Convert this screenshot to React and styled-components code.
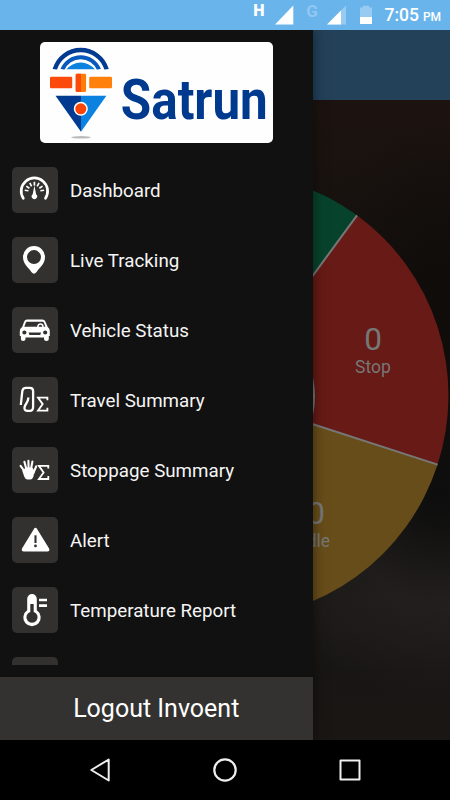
import React from "react";
import styled, { createGlobalStyle } from "styled-components";

const GlobalStyle = createGlobalStyle`
  *, *::before, *::after { box-sizing: border-box; }
  body { margin: 0; background: #000; font-family: Roboto, sans-serif; }
  svg { display: block; }
`;

const Phone = styled.div`
  width: 450px;
  height: 800px;
  display: flex;
  flex-direction: column;
  overflow: hidden;
  background: #000;
`;

const StatusBar = styled.header`
  height: 30px;
  flex: none;
  display: flex;
  justify-content: flex-end;
  background: #6ab4ec;
  color: #fff;
`;

const StatusIcons = styled.svg`
  width: 130px;
  height: 30px;
`;

const Clock = styled.div`
  width: 74px;
  padding-left: 8.5px;
  font-size: 17.5px;
  font-weight: 500;
  line-height: 31px;
  white-space: nowrap;
`;

const Meridiem = styled.span`
  margin-left: 4px;
  font-size: 12px;
`;

const Stage = styled.main`
  position: relative;
  height: 710px;
  flex: none;
  display: flex;
  flex-direction: column;
  overflow: hidden;
`;

const AppBar = styled.div`
  height: 70px;
  flex: none;
  background: #234159;
`;

const Backdrop = styled.section`
  height: 640px;
  background:
    radial-gradient(ellipse 90px 110px at 440px 395px, #0d0d0d 0%, transparent 100%),
    radial-gradient(ellipse 140px 180px at 450px 200px, #100c0a 10%, transparent 100%),
    radial-gradient(ellipse 170px 120px at 450px 480px, #23201e 0%, transparent 100%),
    linear-gradient(#1c1310 0, #17120f 120px, #110e0c 260px, #151311 400px, #1c1a18 500px, #181614 570px, #1a1614 640px);
`;

const Chart = styled.svg`
  width: 450px;
  height: 640px;
`;

const Drawer = styled.aside`
  position: absolute;
  inset: 0 auto 0 0;
  width: 312.5px;
  display: flex;
  flex-direction: column;
  background: #111;
  box-shadow: 0 0 12px rgba(0, 0, 0, 0.5);
`;

const Brand = styled.div`
  width: 233px;
  height: 101px;
  flex: none;
  margin: 12px 0 0 40px;
  border-radius: 5px;
  background: #fefefe;
`;

const LogoArt = styled.svg`
  width: 233px;
  height: 101px;
  overflow: visible;
`;

const Menu = styled.nav`
  height: 510px;
  flex: none;
  margin-top: 12px;
  padding: 12px 12px 0;
  display: flex;
  flex-direction: column;
  gap: 24px;
  overflow: hidden;
`;

const MenuItem = styled.div`
  height: 46px;
  flex: none;
  display: flex;
  align-items: center;
  gap: 12px;
  color: #f5f5f5;
  font-size: 18.75px;
  white-space: nowrap;
`;

const Label = styled.span`
  padding-top: 2px;
`;

const IconTile = styled.div`
  width: 46px;
  height: 46px;
  flex: none;
  border-radius: 5px;
  background: #333130;
`;

const Logout = styled.div`
  height: 63px;
  flex: none;
  margin-top: auto;
  display: flex;
  align-items: center;
  justify-content: center;
  background: #343230;
  color: #fff;
  font-size: 25px;
`;

const NavBar = styled.footer`
  height: 60px;
  flex: none;
  display: flex;
  align-items: center;
  justify-content: center;
  gap: 95px;
  background: #000;
`;

const NavIcon = styled.svg`
  width: 30px;
  height: 30px;
  fill: none;
  stroke: #eee;
  stroke-width: 2;
  stroke-linejoin: round;
`;

const Glyph = ({ children }) => (
  <svg width="46" height="46" viewBox="0 0 46 46" fill="none" stroke="#fff">
    {children}
  </svg>
);

const ticks = [-82, -56, -28, 0, 28, 56, 82];

const DashboardIcon = () => (
  <Glyph>
    <path d="M11.3 31.3A13.2 13.2 0 1 1 33.5 31.3" strokeWidth="2.7" strokeLinecap="round" />
    {ticks.map((a) => (
      <path key={a} d="M22.4 14.8v3.8" strokeWidth="1.7" transform={`rotate(${a} 22.4 24.6)`} />
    ))}
    <path d="M22.4 18.5L24.1 27.3A2.7 2.7 0 1 1 20.7 27.3Z" fill="#fff" stroke="none" />
  </Glyph>
);

const PinIcon = () => (
  <Glyph>
    <path
      fill="#fff"
      stroke="none"
      fillRule="evenodd"
      d="M22 9A11 11 0 0 0 11 20C11 27 16.5 30.5 19.6 35.3Q22 38 24.4 35.3C27.5 30.5 33 27 33 20A11 11 0 0 0 22 9ZM22 13.1A7 7 0 1 1 22 27.1A7 7 0 0 1 22 13.1Z"
    />
  </Glyph>
);

const CarIcon = () => (
  <Glyph>
    <path
      fill="#fff"
      stroke="none"
      fillRule="evenodd"
      d="M14.7 12.6H30.3Q32.8 12.6 33.8 15.6L35.6 19.8Q37.8 21.5 37.8 24.5V29H36.8V32Q36.8 34 34.5 34Q32 34 32 32V30.5H13.5V32Q13.5 34 11 34Q8.9 34 8.9 32V29H7.8V24.5Q7.8 21.5 10.3 19.8L11.8 15.6Q12.7 12.6 14.7 12.6ZM14.9 14.8Q14.1 14.8 13.7 16L12.3 19.8H33.4L32 16Q31.6 14.8 30.7 14.8ZM12.4 23.4A2.1 2.1 0 1 0 12.4 27.6A2.1 2.1 0 0 0 12.4 23.4ZM33.2 23.4A2.1 2.1 0 1 0 33.2 27.6A2.1 2.1 0 0 0 33.2 23.4ZM16.6 25.6L17.4 28H28.3L29 25.6Z"
    />
    <path d="M25.8 20C26 17.7 27 17 28.5 17S31 18 31 20" strokeWidth="1.5" />
  </Glyph>
);

const Sigma = ({ x, y }) => (
  <path
    transform={`translate(${x} ${y})`}
    d="M10.7 3.6V0.9H1.3L6 7.4L1.3 14H10.7V11"
    strokeWidth="1.8"
  />
);

const TravelIcon = () => (
  <Glyph>
    <path
      d="M8.8 28L10.3 14.2Q10.8 10.8 14 10.8H17.8Q21.1 10.8 21.1 14V30Q21.1 33.8 17.7 33.8H15.6Q12.1 33.8 12.5 30.5Q12.8 28.5 14.3 26.5Q16.2 24 16.4 20.5"
      strokeWidth="2.3"
    />
    <Sigma x={24.7} y={19.7} />
  </Glyph>
);

const StoppageIcon = () => (
  <Glyph>
    <g strokeLinecap="round" strokeWidth="2.1">
      <path d="M13 25L8.6 18.8" />
      <path d="M14.6 23L12.4 14.8" />
      <path d="M16.6 22L16.4 13.8" />
      <path d="M19 22L20.4 14.6" />
      <path d="M21.4 26L24.2 19.4" />
    </g>
    <path d="M11.6 22.4L14 20.6H20.3L22.6 24L21.4 29.4Q20.4 32.6 18.3 32.6H15.6Q13.4 32.6 12.3 29.8L10.2 23.6Z" fill="#fff" stroke="none" />
    <Sigma x={25.6} y={18} />
  </Glyph>
);

const AlertIcon = () => (
  <Glyph>
    <path d="M23.5 12.3L11.3 32.4Q11 33 11.7 33H35.5Q36.2 33 35.8 32.4Z" fill="#fff" strokeWidth="3" strokeLinejoin="round" />
    <path d="M23.5 18.3V26" stroke="#333130" strokeWidth="2.1" />
    <circle cx="23.5" cy="28.9" r="1.4" fill="#333130" stroke="none" />
  </Glyph>
);

const ThermometerIcon = () => (
  <Glyph>
    <path
      fill="#fff"
      stroke="none"
      fillRule="evenodd"
      d="M15.2 11.8A4.8 4.8 0 0 1 24.8 11.8V23.3A8.7 8.7 0 1 1 15.2 23.3ZM18.3 17V24.9A5.6 5.6 0 1 0 21.7 24.9V17Z"
    />
    <path d="M27 13H35M27 18.6H35" strokeWidth="2.6" />
  </Glyph>
);

const menu = [
  { label: "Dashboard", Icon: DashboardIcon },
  { label: "Live Tracking", Icon: PinIcon },
  { label: "Vehicle Status", Icon: CarIcon },
  { label: "Travel Summary", Icon: TravelIcon },
  { label: "Stoppage Summary", Icon: StoppageIcon },
  { label: "Alert", Icon: AlertIcon },
  { label: "Temperature Report", Icon: ThermometerIcon },
  { label: "", Icon: null },
];

const Logo = () => (
  <LogoArt viewBox="0 0 233 101">
    <g fill="none">
      <path d="M14.7 27.5A27.1 27.1 0 0 1 66.7 27.5" stroke="#003a91" strokeWidth="4.4" />
      <path d="M22.4 27.5A19.8 19.8 0 0 1 59 27.5" stroke="#0759bd" strokeWidth="4" />
    </g>
    <path d="M26.3 27.5A18.4 18.4 0 0 1 55.1 27.5Z" fill="#0b82df" />
    <path d="M5 27.6H75V31H5Z" fill="#fefefe" />
    <rect x="10" y="34.8" width="22.2" height="11.4" rx="1.3" fill="#fb4a09" />
    <rect x="49.2" y="34.8" width="22.8" height="11.4" rx="1.3" fill="#ff800b" />
    <rect x="35.7" y="31.8" width="10.4" height="18.1" rx="1.3" fill="#ff7c08" />
    <path d="M37 31.8H41V49.9H37Q35.7 49.9 35.7 48.6V33.1Q35.7 31.8 37 31.8Z" fill="#fb4a09" />
    <path d="M15.5 53.8H41V89.8Z" fill="#003a91" />
    <path d="M66.4 53.8H41V89.8Z" fill="#0b82df" />
    <circle cx="40.8" cy="66.8" r="6.3" fill="#fb4608" stroke="#fff" strokeWidth="1.5" />
    <ellipse cx="41" cy="95.3" rx="10" ry="1.2" fill="#bbb" />
    <text x="80.8" y="76.8" fill="#003a8f" fontFamily="Roboto" fontWeight="700" fontSize="56" textLength="147" lengthAdjust="spacingAndGlyphs">
      Satrun
    </text>
  </LogoArt>
);

const StatusChart = () => (
  <Chart viewBox="0 100 450 640">
    <path d="M225 395.7V172.2A223.5 223.5 0 0 1 357 215.3Z" fill="#07432c" />
    <path d="M225 395.7L357 215.3A223.5 223.5 0 0 1 437.6 464.6Z" fill="#671a16" />
    <path d="M225 395.7L437.6 464.6A223.5 223.5 0 0 1 225 619.2Z" fill="#674d19" />
    <path d="M357 215.3L225 395.7L437.6 464.6" fill="none" stroke="#777" strokeWidth="2" />
    <circle cx="225" cy="396.5" r="90" fill="#777" />
    <g fill="#777" fontFamily="Roboto" textAnchor="middle">
      <text x="373" y="349.5" fontSize="31.5">0</text>
      <text x="373" y="373" fontSize="17.5">Stop</text>
      <text x="316" y="523.5" fontSize="31.5">0</text>
      <text x="316" y="547" fontSize="17.5">Idle</text>
    </g>
  </Chart>
);

export default function App() {
  return (
    <Phone>
      <GlobalStyle />
      <StatusBar>
        <StatusIcons viewBox="246 0 130 30" fill="#fff">
          <text x="253.2" y="16" fontFamily="Roboto" fontWeight="900" fontSize="16">H</text>
          <path d="M275 24.5L293.3 5.5V24.5Z" />
          <text x="306.2" y="17" fontFamily="Roboto" fontWeight="700" fontSize="17" fill="#90c7f1">G</text>
          <path d="M327 24.5L346 5.5V24.5Z" fill="#98cbf2" />
          <path d="M327 24.5L341 10.5V24.5Z" />
          <path d="M360 7.5H362.8V5.7H369.2V7.5H372V24H360Z" fill="#98cbf2" />
          <path d="M360 17H372V24H360Z" />
        </StatusIcons>
        <Clock>
          7:05<Meridiem>PM</Meridiem>
        </Clock>
      </StatusBar>
      <Stage>
        <AppBar />
        <Backdrop>
          <StatusChart />
        </Backdrop>
        <Drawer>
          <Brand>
            <Logo />
          </Brand>
          <Menu>
            {menu.map(({ label, Icon }) => (
              <MenuItem key={label}>
                <IconTile>{Icon && <Icon />}</IconTile>
                <Label>{label}</Label>
              </MenuItem>
            ))}
          </Menu>
          <Logout>Logout Invoent</Logout>
        </Drawer>
      </Stage>
      <NavBar>
        <NavIcon viewBox="0 0 30 30">
          <path d="M6.3 15L23.7 4.5V25.5Z" />
        </NavIcon>
        <NavIcon viewBox="0 0 30 30">
          <circle cx="15" cy="15" r="10.7" strokeWidth="2.2" />
        </NavIcon>
        <NavIcon viewBox="0 0 30 30">
          <rect x="5.5" y="5.5" width="19" height="19" />
        </NavIcon>
      </NavBar>
    </Phone>
  );
}
